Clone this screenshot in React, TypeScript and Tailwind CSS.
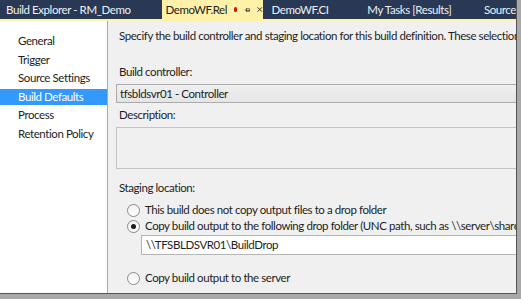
import React from "react";

const FONT = { fontFamily: 'Lato, "Noto Sans", sans-serif' };

const SECTIONS = ["General", "Trigger", "Source Settings", "Build Defaults", "Process", "Retention Policy"];

function Radio({ checked }: { checked?: boolean }) {
  return (
    <span className="flex h-[13px] w-[13px] shrink-0 items-center justify-center rounded-full border border-[#8a8a8a] bg-gradient-to-b from-[#f2f2f2] to-white">
      {checked && <span className="h-[5px] w-[5px] rounded-full bg-[#1a1a1a]" />}
    </span>
  );
}

export default function App() {
  return (
    <div
      className="h-[299px] w-[521px] overflow-hidden bg-[#a8a8a8] text-[11.5px] leading-[16px] tracking-[-0.42px] text-[#1e1e1e]"
      style={FONT}
    >
      <div className="flex h-[294px] w-[517px] flex-col overflow-hidden border-b border-r border-[#555] bg-[#f0f0f0]">
        {/* Document tabs */}
        <div className="flex h-[19px] shrink-0 items-end whitespace-nowrap bg-[#293955] leading-none text-[#eef0f4]">
          <div className="w-[162px] pb-[4px] pl-[6px]">Build Explorer - RM_Demo</div>
          <div className="flex h-[19px] w-[101px] items-center bg-[#fff1a8] pl-[4px] text-[#1e1e1e]">
            <span>DemoWF.Rel</span>
            <span className="ml-[7px] h-[5px] w-[5px] rounded-full bg-[#d21414]" />
            <svg className="ml-[7px]" width="11" height="10" viewBox="0 0 11 10">
              <path d="M1 5h3M4 2v6M4 3h5v4H4M4 6h5" stroke="#222" strokeWidth="1" fill="none" />
            </svg>
            <svg className="ml-[6px]" width="9" height="9" viewBox="0 0 9 9">
              <path d="M1 1l7 7M8 1l-7 7" stroke="#222" strokeWidth="1.5" />
            </svg>
          </div>
          <div className="w-[95px] pb-[4px] pl-[9px]">DemoWF.CI</div>
          <div className="w-[123px] pb-[4px] pl-[10px]">My Tasks [Results]</div>
          <div className="pb-[4px] pl-[4px]">Source</div>
        </div>
        <div className="h-[2px] shrink-0 bg-[#fff1a8]" />

        <div className="flex min-h-0 flex-1">
          {/* Section list */}
          <div className="flex w-[108px] shrink-0 flex-col gap-[2.6px] whitespace-nowrap border-r border-[#a9a9a9] bg-white pt-[12px]">
            {SECTIONS.map((s) => (
              <div
                key={s}
                className={`flex h-[16px] items-center pl-[18px] ${s === "Build Defaults" ? "bg-[#3399ff] text-white" : ""}`}
              >
                {s}
              </div>
            ))}
          </div>

          {/* Build Defaults page */}
          <div className="min-w-0 flex-1 overflow-hidden whitespace-nowrap pl-[8px] pt-[7px]">
            <div className="pl-[3px]">
              Specify the build controller and staging location for this build definition. These selections apply to all builds.
            </div>
            <div className="mt-[20px] pl-[3px]">Build controller:</div>
            <div className="mt-[4px] flex h-[19px] w-[420px] items-center border border-[#acacac] bg-gradient-to-b from-[#f0f0f0] to-[#e5e5e5] pl-[3px]">
              tfsbldsvr01 - Controller
            </div>
            <div className="mt-[4px] pl-[3px]">Description:</div>
            <div className="mt-[4px] h-[42px] w-[420px] border border-[#c4c4c4] bg-[#f0f0f0]" />
            <div className="mt-[11px] pl-[3px]">Staging location:</div>
            <div className="mt-[6px] flex h-[16px] items-center gap-[5px] pl-[11px]">
              <Radio />
              <span>This build does not copy output files to a drop folder</span>
            </div>
            <div className="flex h-[16px] items-center gap-[5px] pl-[11px]">
              <Radio checked />
              <span>Copy build output to the following drop folder (UNC path, such as \\server\share):</span>
            </div>
            <div className="ml-[25px] mt-[1px] flex h-[20px] w-[400px] items-center border border-[#b5b5b5] bg-white pl-[4px]">
              \\TFSBLDSVR01\BuildDrop
            </div>
            <div className="mt-[15px] flex h-[16px] items-center gap-[5px] pl-[11px]">
              <Radio />
              <span>Copy build output to the server</span>
            </div>
          </div>
        </div>
      </div>
    </div>
  );
}
